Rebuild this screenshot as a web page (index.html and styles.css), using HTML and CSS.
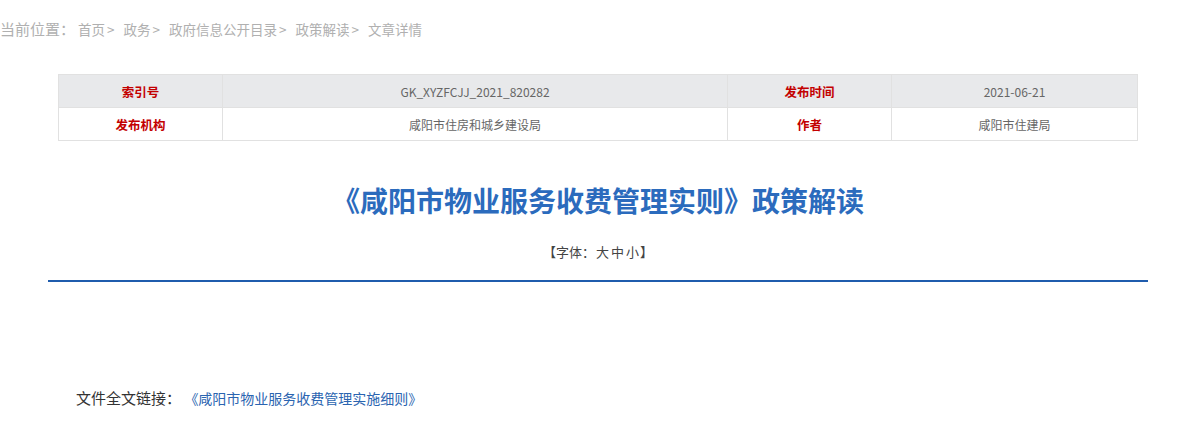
FILE: index.html
```html
<!DOCTYPE html>
<html lang="zh-CN">
<head>
    <meta charset="UTF-8">
    <title>政策解读 - 文章详情</title>
    <link rel="stylesheet" href="styles.css">
</head>
<body>
    <div class="crumb">
        <span class="crumb-label">当前位置：</span><a href="#">首页</a><span class="sep">&gt;</span><a href="#">政务</a><span class="sep">&gt;</span><a href="#">政府信息公开目录</a><span class="sep">&gt;</span><a href="#">政策解读</a><span class="sep">&gt;</span><a href="#">文章详情</a>
    </div>

    <div class="article">
        <table class="meta-table">
            <tr class="row-gray">
                <th>索引号</th>
                <td>GK_XYZFCJJ_2021_820282</td>
                <th>发布时间</th>
                <td>2021-06-21</td>
            </tr>
            <tr>
                <th>发布机构</th>
                <td>咸阳市住房和城乡建设局</td>
                <th>作者</th>
                <td>咸阳市住建局</td>
            </tr>
        </table>

        <div class="article-head">
            <h1 class="article-title">《咸阳市物业服务收费管理实则》政策解读</h1>
            <div class="font-size">【字体：<a href="#">大</a><a href="#">中</a><a href="#">小</a>】</div>
        </div>

        <div class="article-body">
            <p class="file-link">文件全文链接： <a href="#">《咸阳市物业服务收费管理实施细则》</a></p>
        </div>
    </div>
</body>
</html>
```

FILE: styles.css
```css
body {
    margin: 0;
    font-family: "Noto Sans CJK SC", "Liberation Sans", sans-serif;
    background-color: #fff;
    color: #333;
}

a {
    text-decoration: none;
    color: inherit;
}

.crumb {
    height: 60px;
    line-height: 58px;
    font-size: 13.5px;
    color: #b0b0b0;
    white-space: nowrap;
}

.crumb-label {
    font-size: 15px;
    margin-right: 3px;
}

.crumb .sep {
    margin: 0 9px 0 2px;
}

.article {
    width: 1100px;
    margin: 14px 0 0 48px;
}

.meta-table {
    width: 1080px;
    margin: 0 10px;
    border-collapse: collapse;
    font-size: 12px;
    table-layout: fixed;
}

.meta-table th,
.meta-table td {
    height: 32px;
    padding: 0;
    border: 1px solid #e1e1e1;
    text-align: center;
    font-weight: normal;
}

.meta-table th {
    color: #c30000;
    font-weight: bold;
    font-size: 12.5px;
}

.meta-table td {
    color: #666;
}

.meta-table th:nth-child(1) { width: 163px; }
.meta-table td:nth-child(2) { width: 504px; }
.meta-table th:nth-child(3) { width: 163px; }

.row-gray {
    background-color: #e8e9eb;
}

.article-head {
    margin-top: 38px;
    padding-bottom: 18px;
    border-bottom: 2px solid #1f5cad;
    text-align: center;
}

.article-title {
    margin: 0;
    font-size: 28px;
    line-height: 42px;
    color: #2b6bbd;
    font-weight: bold;
}

.font-size {
    margin-top: 21px;
    font-size: 13px;
    line-height: 20px;
    color: #444;
}

.font-size a {
    margin: 0 1px;
}

.article-body {
    padding: 104px 28px 0;
}

.file-link {
    margin: 0;
    font-size: 15px;
    line-height: 24px;
    color: #333;
}

.file-link a {
    font-size: 14px;
    color: #2a64b0;
}
```
